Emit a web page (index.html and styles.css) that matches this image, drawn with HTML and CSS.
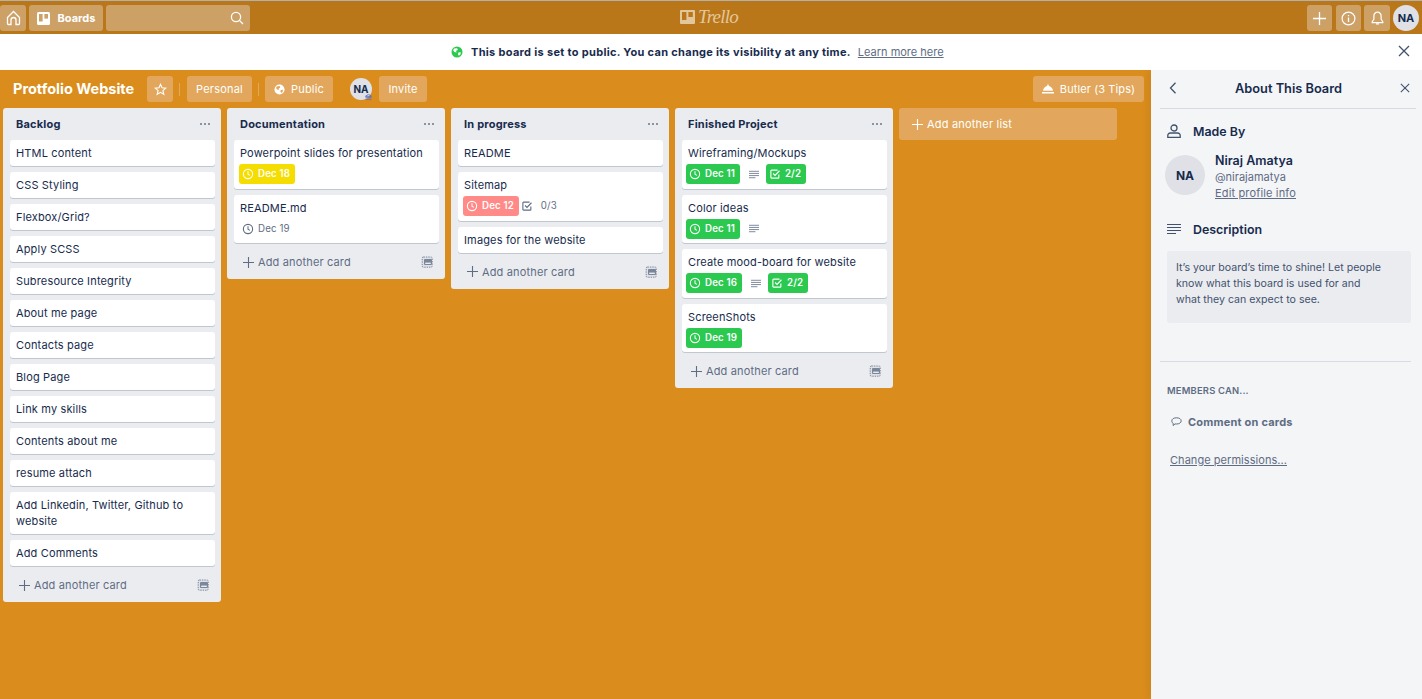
FILE: index.html
```html
<!DOCTYPE html>
<html lang="en">
<head>
    <meta charset="UTF-8">
    <title>Protfolio Website | Trello</title>
    <link rel="stylesheet" href="styles.css">
</head>
<body>
    <svg class="sprite" width="0" height="0">
        <symbol id="i-clock" viewBox="0 0 14 14"><circle cx="7" cy="7" r="5.4" fill="none" stroke="currentColor" stroke-width="1.3"/><path d="M7 3.8V7.3L9.2 8.6" fill="none" stroke="currentColor" stroke-width="1.2"/></symbol>
        <symbol id="i-check" viewBox="0 0 14 14"><path d="M11.5 7.5V11a.8.8 0 0 1-.8.8H3a.8.8 0 0 1-.8-.8V3.3A.8.8 0 0 1 3 2.5h7" fill="none" stroke="currentColor" stroke-width="1.3"/><path d="M4.8 6.4L7 8.6L12.2 3.2" fill="none" stroke="currentColor" stroke-width="1.3"/></symbol>
        <symbol id="i-desc" viewBox="0 0 14 12"><path d="M0 1.5H14M0 4.5H14M0 7.5H14M0 10.5H9" fill="none" stroke="currentColor" stroke-width="1.2"/></symbol>
        <symbol id="i-plus" viewBox="0 0 12 12"><path d="M6 0V12M0 6H12" fill="none" stroke="currentColor" stroke-width="1.2"/></symbol>
        <symbol id="i-close" viewBox="0 0 12 12"><path d="M1 1L11 11M11 1L1 11" fill="none" stroke="currentColor" stroke-width="1.3"/></symbol>
        <symbol id="i-globe" viewBox="0 0 12 12"><circle cx="6" cy="6" r="5.5" fill="currentColor"/><path d="M3 2.6L6.2 2.2L6.8 4L5 4.8L5.6 6.4L3.4 6L2.2 4.4ZM7.4 6.6L9.8 6.2L9.4 8.6L7.8 9.8L7 8.2Z" style="fill: var(--globe-land, #fff)"/></symbol>
        <symbol id="i-template" viewBox="0 0 12 12"><path d="M2.5 1H10a1.2 1.2 0 0 1 1.2 1.2V10A1.2 1.2 0 0 1 10 11.2H2.5A1.2 1.2 0 0 1 1.2 10V2.2A1.2 1.2 0 0 1 2.5 1Z" fill="#dfe1e6" stroke="currentColor" stroke-width="1" stroke-dasharray="1.4 1"/><rect x="3" y="3" width="8" height="6" rx="1" fill="currentColor"/><rect x="4.2" y="6.6" width="5.6" height="1.4" fill="#ebecf0"/></symbol>
        <symbol id="i-dots" viewBox="0 0 12 4"><circle cx="2" cy="2" r="1"/><circle cx="6" cy="2" r="1"/><circle cx="10" cy="2" r="1"/></symbol>
    </svg>

    <nav class="topbar">
        <div class="topbar-left">
            <a class="nav-btn nav-home">
                <svg width="15" height="16" viewBox="0 0 15 16"><path d="M1.5 7.5L7.5 1.5L13.5 7.5V13.5a1 1 0 0 1-1 1H10V10a2.5 2.5 0 0 0-5 0V14.5H2.5a1 1 0 0 1-1-1Z" fill="none" stroke="currentColor" stroke-width="1.3"/></svg>
            </a>
            <a class="nav-btn nav-boards">
                <svg width="13" height="13" viewBox="0 0 13 13"><rect width="13" height="13" rx="1.5" fill="currentColor"/><rect x="2" y="2" width="3.6" height="7.5" fill="#cda066"/><rect x="7.4" y="2" width="3.6" height="4.6" fill="#cda066"/></svg>
                <span>Boards</span>
            </a>
            <div class="nav-btn nav-search">
                <svg width="14" height="14" viewBox="0 0 14 14"><circle cx="6" cy="6" r="4.6" fill="none" stroke="currentColor" stroke-width="1.3"/><path d="M9.4 9.4L13 13" fill="none" stroke="currentColor" stroke-width="1.3"/></svg>
            </div>
        </div>
        <div class="logo">
            <svg width="15" height="14" viewBox="0 0 15 14"><rect width="15" height="14" rx="1" fill="currentColor"/><rect x="2" y="2" width="4.4" height="8" fill="#b9771a"/><rect x="8.4" y="2" width="4.4" height="5" fill="#b9771a"/></svg>
            <span>Trello</span>
        </div>
        <div class="topbar-right">
            <a class="nav-btn nav-add"><svg width="13" height="13"><use href="#i-plus"/></svg></a>
            <a class="nav-btn nav-info">
                <svg width="15" height="15" viewBox="0 0 15 15"><circle cx="7.5" cy="7.5" r="6.4" fill="none" stroke="currentColor" stroke-width="1.2"/><path d="M7.5 6.5V11M7.5 4V5.3" fill="none" stroke="currentColor" stroke-width="1.3"/></svg>
            </a>
            <a class="nav-btn nav-bell">
                <svg width="13" height="15" viewBox="0 0 13 15"><path d="M6.5 1.2a3.6 3.6 0 0 0-3.6 3.6V8L1.2 10.8V11.6H11.8V10.8L10.100 8V4.800A3.600 3.600 0 0 0 6.500 1.200ZM5 13H8" fill="none" stroke="currentColor" stroke-width="1.2"/></svg>
            </a>
            <span class="avatar avatar-nav">NA</span>
        </div>
    </nav>

    <div class="notice">
        <svg class="notice-globe" width="12" height="12"><use href="#i-globe"/></svg>
        <strong>This board is set to public. You can change its visibility at any time.</strong>
        <a class="notice-link">Learn more here</a>
        <svg class="notice-close" width="12" height="12"><use href="#i-close"/></svg>
    </div>

    <div class="workspace">
        <main class="board">
            <header class="board-header">
                <h1>Protfolio Website</h1>
                <a class="board-btn star-btn">
                    <svg width="13" height="13" viewBox="0 0 13 13"><path d="M6.500 1.300L8 4.800L11.800 5.100L8.900 7.600L9.800 11.400L6.500 9.400L3.200 11.400L4.100 7.600L1.200 5.100L5 4.800Z" fill="none" stroke="currentColor" stroke-width="1.100"/></svg>
                </a>
                <span class="sep"></span>
                <a class="board-btn btn-personal">Personal</a>
                <span class="sep sep-tight"></span>
                <a class="board-btn btn-public"><svg width="11" height="11"><use href="#i-globe"/></svg>Public</a>
                <span class="avatar avatar-board">NA
                    <svg class="admin-mark" width="7" height="6" viewBox="0 0 7 6"><path d="M3.500 .3L6.500 2.300H.5ZM.5 3.300H6.500M.5 5.300H6.500" fill="none" stroke="currentColor" stroke-width=".9"/></svg>
                </span>
                <a class="board-btn btn-invite">Invite</a>
                <a class="board-btn btn-butler">
                    <svg width="12" height="10" viewBox="0 0 12 10"><path d="M1 6.800A5 5 0 0 1 6 2A5 5 0 0 1 11 6.800ZM0 8H12V9.600H0ZM5.300 .4H6.700V2H5.300Z" fill="currentColor"/></svg>
                    Butler (3 Tips)
                </a>
            </header>

            <div class="lists">
                <section class="list">
                    <div class="list-head"><h2>Backlog</h2><svg class="dots" width="12" height="4"><use href="#i-dots"/></svg></div>
                    <div class="card">HTML content</div>
                    <div class="card">CSS Styling</div>
                    <div class="card">Flexbox/Grid?</div>
                    <div class="card">Apply SCSS</div>
                    <div class="card">Subresource Integrity</div>
                    <div class="card">About me page</div>
                    <div class="card">Contacts page</div>
                    <div class="card">Blog Page</div>
                    <div class="card">Link my skills</div>
                    <div class="card">Contents about me</div>
                    <div class="card">resume attach</div>
                    <div class="card">Add Linkedin, Twitter, Github to website</div>
                    <div class="card">Add Comments</div>
                    <div class="list-foot"><svg width="11" height="11"><use href="#i-plus"/></svg><span>Add another card</span><svg class="tpl" width="12" height="12"><use href="#i-template"/></svg></div>
                </section>

                <section class="list">
                    <div class="list-head"><h2>Documentation</h2><svg class="dots" width="12" height="4"><use href="#i-dots"/></svg></div>
                    <div class="card">Powerpoint slides for presentation
                        <div class="badges">
                            <span class="badge badge-yellow"><svg width="12" height="12"><use href="#i-clock"/></svg>Dec 18</span>
                        </div>
                    </div>
                    <div class="card">README.md
                        <div class="badges">
                            <span class="badge badge-plain"><svg width="12" height="12"><use href="#i-clock"/></svg>Dec 19</span>
                        </div>
                    </div>
                    <div class="list-foot"><svg width="11" height="11"><use href="#i-plus"/></svg><span>Add another card</span><svg class="tpl" width="12" height="12"><use href="#i-template"/></svg></div>
                </section>

                <section class="list">
                    <div class="list-head"><h2>In progress</h2><svg class="dots" width="12" height="4"><use href="#i-dots"/></svg></div>
                    <div class="card">README</div>
                    <div class="card">Sitemap
                        <div class="badges">
                            <span class="badge badge-red"><svg width="12" height="12"><use href="#i-clock"/></svg>Dec 12</span>
                            <span class="badge badge-plain badge-count"><svg width="12" height="12"><use href="#i-check"/></svg>0/3</span>
                        </div>
                    </div>
                    <div class="card">Images for the website</div>
                    <div class="list-foot"><svg width="11" height="11"><use href="#i-plus"/></svg><span>Add another card</span><svg class="tpl" width="12" height="12"><use href="#i-template"/></svg></div>
                </section>

                <section class="list list-done">
                    <div class="list-head"><h2>Finished Project</h2><svg class="dots" width="12" height="4"><use href="#i-dots"/></svg></div>
                    <div class="card">Wireframing/Mockups
                        <div class="badges">
                            <span class="badge badge-green"><svg width="12" height="12"><use href="#i-clock"/></svg>Dec 11</span>
                            <svg class="desc-icon" width="10" height="9"><use href="#i-desc"/></svg>
                            <span class="badge badge-green"><svg width="12" height="12"><use href="#i-check"/></svg>2/2</span>
                        </div>
                    </div>
                    <div class="card">Color ideas
                        <div class="badges">
                            <span class="badge badge-green"><svg width="12" height="12"><use href="#i-clock"/></svg>Dec 11</span>
                            <svg class="desc-icon" width="10" height="9"><use href="#i-desc"/></svg>
                        </div>
                    </div>
                    <div class="card">Create mood-board for website
                        <div class="badges">
                            <span class="badge badge-green"><svg width="12" height="12"><use href="#i-clock"/></svg>Dec 16</span>
                            <svg class="desc-icon" width="10" height="9"><use href="#i-desc"/></svg>
                            <span class="badge badge-green"><svg width="12" height="12"><use href="#i-check"/></svg>2/2</span>
                        </div>
                    </div>
                    <div class="card">ScreenShots
                        <div class="badges">
                            <span class="badge badge-green"><svg width="12" height="12"><use href="#i-clock"/></svg>Dec 19</span>
                        </div>
                    </div>
                    <div class="list-foot"><svg width="11" height="11"><use href="#i-plus"/></svg><span>Add another card</span><svg class="tpl" width="12" height="12"><use href="#i-template"/></svg></div>
                </section>

                <a class="add-list"><svg width="11" height="11"><use href="#i-plus"/></svg>Add another list</a>
            </div>
        </main>

        <aside class="panel">
            <div class="panel-head">
                <svg width="8" height="12" viewBox="0 0 8 12"><path d="M6.500 .8L1.500 6L6.500 11.200" fill="none" stroke="currentColor" stroke-width="1.300"/></svg>
                <h3>About This Board</h3>
                <svg width="10" height="10"><use href="#i-close"/></svg>
            </div>

            <div class="section-title">
                <svg width="14" height="14" viewBox="0 0 14 14"><circle cx="7" cy="4" r="3" fill="none" stroke="currentColor" stroke-width="1.300"/><path d="M.8 13.300V11.500A2.500 2.500 0 0 1 3.300 9H10.700A2.500 2.500 0 0 1 13.200 11.500V13.300Z" fill="none" stroke="currentColor" stroke-width="1.300"/></svg>
                <h4>Made By</h4>
            </div>
            <div class="profile">
                <span class="avatar avatar-large">NA</span>
                <div class="profile-text">
                    <div class="profile-name">Niraj Amatya</div>
                    <div class="profile-handle">@nirajamatya</div>
                    <a class="panel-link">Edit profile info</a>
                </div>
            </div>

            <div class="section-title section-desc">
                <svg width="14" height="12"><use href="#i-desc"/></svg>
                <h4>Description</h4>
            </div>
            <p class="desc-box">It’s your board’s time to shine! Let people know what this board is used for and<br>what they can expect to see.</p>

            <hr class="panel-rule">

            <div class="members-title">MEMBERS CAN...</div>
            <div class="members-item">
                <svg width="11" height="10" viewBox="0 0 11 10"><path d="M5.500 .8C8.200 .8 10.200 2 10.200 3.900S8.200 7 5.500 7C5 7 4.500 7 4 6.900L2.200 8.600V6.300C1.200 5.800 .8 4.900 .8 3.900C.8 2 2.800 .8 5.500 .8Z" fill="none" stroke="currentColor" stroke-width="1"/></svg>
                Comment on cards
            </div>
            <a class="panel-link change-link">Change permissions...</a>
        </aside>
    </div>
</body>
</html>
```

FILE: styles.css
```css
* {
    box-sizing: border-box;
}
html, body {
    height: 100%;
}
body {
    margin: 0;
    display: flex;
    flex-direction: column;
    overflow: hidden;
    font-family: Inter, "Noto Sans", sans-serif;
    font-size: 11px;
    color: #172b4d;
    background: #da8d1c;
}
h1, h2, h3, h4, p {
    margin: 0;
}
.sprite {
    position: absolute;
}

/* top nav */
.topbar {
    height: 34px;
    flex: none;
    display: flex;
    justify-content: space-between;
    align-items: center;
    padding-top: 1px;
    background: #b9771a;
    border-top: 1px solid #b4b1aa;
    position: relative;
    color: #fff;
}
.topbar-left, .topbar-right {
    display: flex;
    align-items: center;
}
.nav-btn {
    height: 26px;
    display: flex;
    align-items: center;
    justify-content: center;
    background: #cda066;
    border-radius: 3px;
}
.nav-home {
    width: 26px;
    margin-right: 3px;
}
.nav-boards {
    width: 74px;
    margin-right: 3px;
    gap: 8px;
    font-weight: 700;
}
.nav-search {
    width: 144px;
    justify-content: flex-end;
    padding-right: 6px;
}
.nav-add {
    width: 25px;
    margin-right: 4px;
}
.nav-info {
    width: 25px;
    margin-right: 3px;
}
.nav-bell {
    width: 26px;
    margin-right: 3px;
}
.logo {
    position: absolute;
    left: 680px;
    top: 3px;
    display: flex;
    align-items: center;
    gap: 3px;
    color: #e3c79c;
}
.logo span {
    font-family: "Liberation Serif", serif;
    font-style: italic;
    font-size: 19px;
    letter-spacing: -.8px;
    line-height: 26px;
}
.avatar {
    display: flex;
    align-items: center;
    justify-content: center;
    background: #dfe1e6;
    border-radius: 50%;
    font-weight: 700;
    color: #172b4d;
}
.avatar-nav {
    width: 26px;
    height: 26px;
    margin-right: 3px;
    font-size: 11px;
}

/* public notice */
.notice {
    height: 36px;
    flex: none;
    display: flex;
    align-items: center;
    padding-left: 451px;
    background: #fff;
    position: relative;
}
.notice-globe {
    color: #2bc94f;
    margin-right: 8px;
}
.notice strong {
    letter-spacing: .31px;
}
.notice-link {
    margin-left: 7px;
    color: #5e6c84;
    text-decoration: underline;
}
.notice-close {
    position: absolute;
    right: 12px;
    top: 11px;
    color: #42526e;
}

/* board */
.workspace {
    flex: 1;
    display: flex;
    min-height: 0;
}
.board {
    flex: 1;
    min-width: 0;
}
.board-header {
    height: 38px;
    display: flex;
    align-items: center;
    color: #fff;
}
.board-header h1 {
    margin-left: 13px;
    width: 134px;
    padding-bottom: 2px;
    font-size: 14.5px;
    font-weight: 700;
    white-space: nowrap;
}
.board-btn {
    height: 26px;
    display: flex;
    align-items: center;
    justify-content: center;
    background: #e2a75c;
    border-radius: 3px;
    letter-spacing: .2px;
}
.star-btn {
    width: 26px;
}
.sep {
    width: 1px;
    height: 13px;
    margin: 0 7px 0 6px;
    background: #e2a75c;
}
.sep-tight {
    margin-right: 6px;
}
.btn-personal {
    width: 65px;
}
.btn-public {
    --globe-land: #e2a75c;
    width: 68px;
    gap: 6px;
}
.avatar-board {
    width: 22px;
    height: 22px;
    margin-left: 17px;
    margin-right: 7px;
    font-size: 10px;
    position: relative;
}
.admin-mark {
    position: absolute;
    right: 0;
    bottom: 0;
    color: #5a6fc0;
}
.btn-invite {
    width: 48px;
}
.btn-butler {
    width: 111px;
    margin-left: auto;
    margin-right: 7px;
    gap: 6px;
    letter-spacing: .1px;
}

.lists {
    display: flex;
    align-items: flex-start;
    gap: 6px;
    padding-left: 3px;
}
.list {
    width: 218px;
    flex: none;
    padding: 0 6px 0 7px;
    background: #ebecf0;
    border-radius: 3px;
}
.list-head {
    height: 32px;
    display: flex;
    align-items: center;
    justify-content: space-between;
    padding: 0 4px 0 6px;
}
.list-head h2 {
    font-size: 11px;
    font-weight: 700;
    letter-spacing: .2px;
}
.dots {
    fill: #6b778c;
}
.card {
    margin-bottom: 6px;
    padding: 5px 6px;
    background: #fff;
    border-radius: 3px;
    box-shadow: 0 1px 0 #c1c7d0;
    line-height: 16px;
    letter-spacing: .15px;
}
.badges {
    height: 20px;
    margin: 3px 0 -.5px -1px;
    display: flex;
    align-items: center;
}
.list-done .badges {
    margin-left: -2px;
}
.badge {
    height: 20px;
    display: flex;
    align-items: center;
    gap: 4px;
    padding: 0 5px 0 3px;
    border-radius: 3px;
    color: #fff;
    font-size: 9.7px;
    font-weight: 600;
}
.badge-yellow {
    background: #f5dd00;
}
.badge-red {
    background: #ff8a87;
}
.badge-green {
    background: #2bc94f;
}
.badge-plain {
    color: #5e6c84;
    font-weight: 400;
}
.badge-count {
    padding-left: 3px;
    margin-left: -1px;
    gap: 8px;
}
.desc-icon {
    margin: 0 7px 0 9px;
    color: #6b778c;
}
.list-foot {
    height: 30px;
    display: flex;
    align-items: center;
    gap: 4px;
    padding: 0 6px 4px 9px;
    color: #5e6c84;
    letter-spacing: .15px;
}
.list-foot .tpl {
    margin-left: auto;
    color: #7a869a;
}
.add-list {
    width: 218px;
    height: 32px;
    display: flex;
    align-items: center;
    gap: 4px;
    padding-left: 13px;
    background: #e2a75c;
    border-radius: 3px;
    color: #fff;
    letter-spacing: .2px;
}

/* side panel */
.panel {
    width: 271px;
    flex: none;
    padding: 0 11px 0 9px;
    background: #f4f5f7;
    box-shadow: -3px 0 6px rgba(0, 0, 0, .06);
    color: #172b4d;
}
.panel-head {
    height: 39px;
    display: flex;
    align-items: center;
    justify-content: space-between;
    padding: 0 6px 2px 9px;
    margin-right: -5px;
    border-bottom: 1px solid #d8dbe3;
    color: #42526e;
}
.panel-head h3 {
    font-size: 12.8px;
    font-weight: 600;
    color: #172b4d;
}
.section-title {
    display: flex;
    align-items: center;
    gap: 12px;
    margin-top: 14px;
    padding-left: 7px;
    height: 16px;
    color: #42526e;
}
.section-title h4 {
    font-size: 12.4px;
    font-weight: 600;
    color: #172b4d;
}
.profile {
    display: flex;
    gap: 10px;
    margin: 13px 0 0 5px;
}
.avatar-large {
    width: 40px;
    height: 40px;
    margin-top: 3px;
    font-size: 12px;
}
.profile-text {
    padding-top: 1px;
}
.profile-name {
    font-size: 12.5px;
    font-weight: 600;
    line-height: 16px;
}
.profile-handle {
    font-size: 11px;
    line-height: 17px;
    color: #5e6c84;
}
.panel-link {
    display: block;
    color: #5e6c84;
    font-size: 11px;
    line-height: 14px;
    letter-spacing: .15px;
    text-decoration: underline;
}
.section-desc {
    margin-top: 21px;
}
.desc-box {
    margin: 14px 0 0 7px;
    height: 72px;
    padding: 9px 9px;
    background: #ebecf0;
    border-radius: 3px;
    font-size: 10.6px;
    line-height: 16px;
    color: #42526e;
}
.panel-rule {
    height: 1px;
    margin: 38px 0 0 0;
    border: 0;
    background: #d8dbe3;
}
.members-title {
    margin: 23px 0 0 7px;
    font-size: 9.4px;
    font-weight: 600;
    letter-spacing: .2px;
    line-height: 12px;
    color: #5e6c84;
}
.members-item {
    display: flex;
    align-items: center;
    gap: 6px;
    margin: 18px 0 0 11px;
    height: 14px;
    font-weight: 700;
    letter-spacing: .2px;
    color: #5e6c84;
}
.change-link {
    margin: 24px 0 0 10px;
    letter-spacing: .05px;
}
```
